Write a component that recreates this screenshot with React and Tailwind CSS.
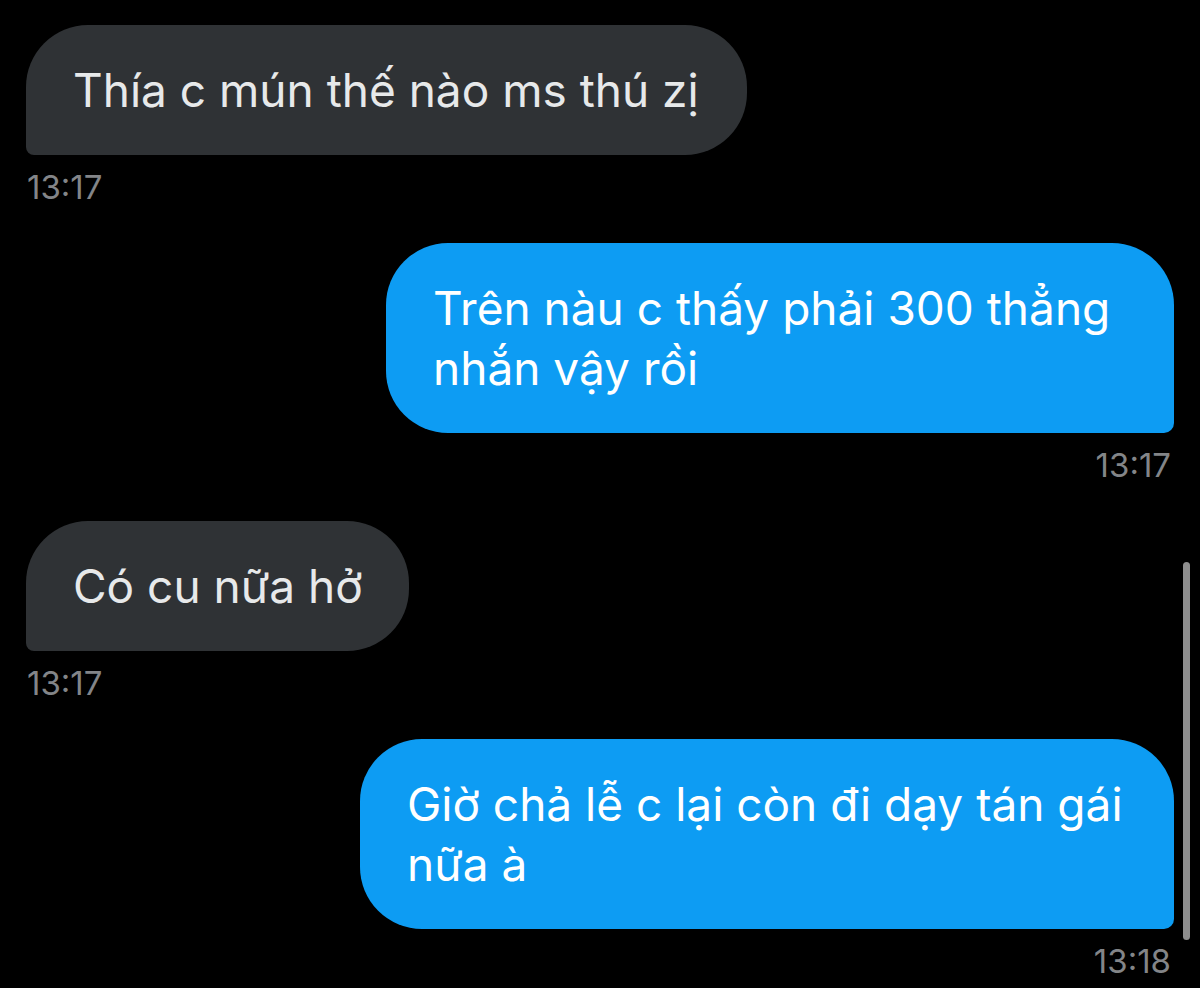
import React from 'react';

const messages = [
    { id: 1, mine: false, width: 'w-[721px]', lines: ['Thía c mún thế nào ms thú zị'], time: '13:17' },
    { id: 2, mine: true, width: 'w-[788px]', lines: ['Trên nàu c thấy phải 300 thẳng', 'nhắn vậy rồi'], time: '13:17' },
    { id: 3, mine: false, width: 'w-[383px]', lines: ['Có cu nữa hở'], time: '13:17' },
    { id: 4, mine: true, width: 'w-[814px]', lines: ['Giờ chả lễ c lại còn đi dạy tán gái', 'nữa à'], time: '13:18' },
];

const Bubble = ({ msg }) => {
    const base = 'py-[35px] px-[47px] text-[46px] leading-[60px] whitespace-nowrap';
    const look = msg.mine
        ? 'bg-[#0d9cf3] text-white rounded-tl-[62px] rounded-tr-[62px] rounded-bl-[62px] rounded-br-[10px] ml-auto'
        : 'bg-[#2f3235] text-[#e7e9ea] rounded-tl-[62px] rounded-tr-[62px] rounded-br-[62px] rounded-bl-[8px]';

    return (
        <div className={`${base} ${look} ${msg.width}`}>
            {msg.lines.map((line, i) => (
                <div key={i}>{line}</div>
            ))}
        </div>
    );
};

export default function App() {
    return (
        <div className="relative w-[1200px] h-[988px] bg-black overflow-hidden" style={{ fontFamily: 'Inter, "Noto Sans", sans-serif' }}>
            <div className="flex flex-col px-[26px] pt-[25px]">
                {messages.map((msg, idx) => (
                    <div key={msg.id} className={`flex flex-col ${idx > 0 ? 'mt-[38px]' : ''}`}>
                        <Bubble msg={msg} />
                        <div className={`mt-[14px] text-[33px] leading-[36px] text-[#838588] ${msg.mine ? 'text-right pr-[3px]' : 'pl-[1px]'}`}>
                            {msg.time}
                        </div>
                    </div>
                ))}
            </div>

            {/* thanh cuộn */}
            <div className="absolute left-[1183px] top-[562px] w-[7px] h-[378px] rounded-full bg-[#8e8e8e]"></div>
        </div>
    );
}
